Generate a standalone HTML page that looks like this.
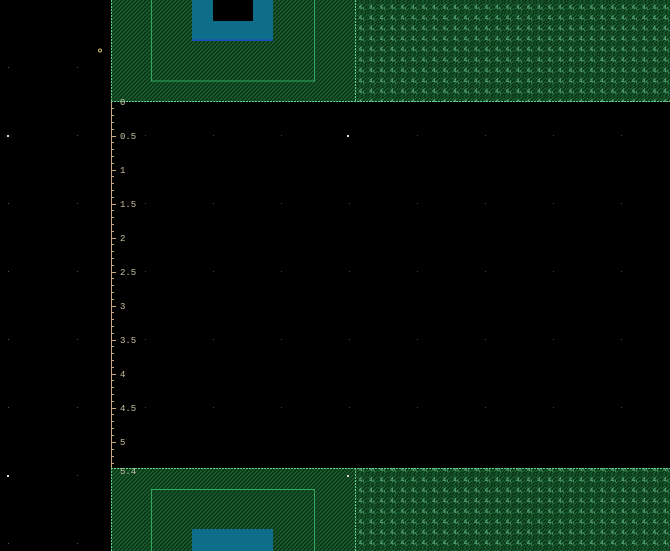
<!DOCTYPE html>
<html><head><style>
html,body{margin:0;padding:0;background:#000;width:670px;height:551px;overflow:hidden}
svg{display:block}
text{font-family:"Liberation Mono",monospace;font-size:9px;fill:#c8c0a0}
</style></head><body>
<svg width="670" height="551" viewBox="0 0 670 551" xmlns="http://www.w3.org/2000/svg">
<defs>
<pattern id="h" width="4" height="4" patternUnits="userSpaceOnUse">
<rect width="4" height="4" fill="#0a3518"/>
<path d="M-1,1 L1,-1 M0,4 L4,0 M3,5 L5,3" stroke="#1f6a34" stroke-width="1"/>
</pattern>
<pattern id="d" x="357" y="2" width="10.5" height="10.5" patternUnits="userSpaceOnUse">
<rect width="10.5" height="10.5" fill="url(#h)"/>
<path d="M2,5 L4,3 L4,7 M2,6 L5,6 M6,5 L7,8" stroke="#4f9a72" stroke-width="0.9" fill="none"/>
</pattern>
</defs>
<rect x="111" y="0" width="244" height="102" fill="url(#h)"/>
<rect x="355" y="0" width="315" height="102" fill="url(#d)"/>
<rect x="151.5" y="-1" width="163" height="82" fill="none" stroke="#2fa860" stroke-width="1"/>
<rect x="192" y="0" width="81" height="41" fill="#0e6e8a"/>
<rect x="192" y="39.5" width="81" height="1.5" fill="#1a4ac0"/>
<rect x="213" y="0" width="40" height="21" fill="#000"/>
<line x1="111" y1="101.5" x2="670" y2="101.5" stroke="#5fcf8a" stroke-dasharray="2,1"/>
<line x1="355.5" y1="0" x2="355.5" y2="102" stroke="#5fcf8a" stroke-dasharray="2,1"/>
<line x1="111.5" y1="0" x2="111.5" y2="102" stroke="#5fcf8a" stroke-dasharray="2,1"/>
<rect x="111" y="468" width="244" height="83" fill="url(#h)"/>
<rect x="355" y="468" width="315" height="83" fill="url(#d)"/>
<rect x="151.5" y="489.5" width="163" height="70" fill="none" stroke="#2fa860" stroke-width="1"/>
<rect x="192" y="529" width="81" height="22" fill="#0e6e8a"/>
<line x1="111" y1="468.5" x2="670" y2="468.5" stroke="#5fcf8a" stroke-dasharray="2,1"/>
<line x1="355.5" y1="468" x2="355.5" y2="551" stroke="#5fcf8a" stroke-dasharray="2,1"/>
<line x1="111.5" y1="468" x2="111.5" y2="551" stroke="#5fcf8a" stroke-dasharray="2,1"/>
<line x1="111.5" y1="102" x2="111.5" y2="468" stroke="#c8a878"/>
<g stroke="#c8a878">
<path id="tk" d="M111,108.5h3M111,115.5h3M111,122.5h3M111,129.5h3M111,136.5h5M111,142.5h3M111,149.5h3M111,156.5h3M111,163.5h3M111,170.5h5M111,176.5h3M111,183.5h3M111,190.5h3M111,197.5h3M111,204.5h5M111,210.5h3M111,217.5h3M111,224.5h3M111,231.5h3M111,238.5h5"/>
<use href="#tk" y="136"/>
<path d="M111,380.5h3M111,387.5h3M111,394.5h3M111,401.5h3M111,408.5h5M111,414.5h3M111,421.5h3M111,428.5h3M111,435.5h3M111,442.5h5M111,449.5h3M111,456.5h3M111,463.5h3"/>
</g>
<text x="120" y="105">0</text>
<text x="120" y="139">0.5</text>
<text x="120" y="173">1</text>
<text x="120" y="207">1.5</text>
<text x="120" y="241">2</text>
<text x="120" y="275">2.5</text>
<text x="120" y="309">3</text>
<text x="120" y="343">3.5</text>
<text x="120" y="377">4</text>
<text x="120" y="411">4.5</text>
<text x="120" y="445">5</text>
<text x="120" y="474">5.4</text>
<circle cx="100" cy="50.5" r="1.5" fill="none" stroke="#d0c060"/>
<g fill="#555">
<rect x="77" y="67" width="1" height="1"/><rect x="8" y="67" width="1" height="1"/>
<rect x="77" y="203" width="1" height="1"/><rect x="8" y="203" width="1" height="1"/>
<rect x="77" y="271" width="1" height="1"/><rect x="8" y="271" width="1" height="1"/>
<rect x="77" y="339" width="1" height="1"/><rect x="8" y="339" width="1" height="1"/>
<rect x="77" y="407" width="1" height="1"/><rect x="8" y="407" width="1" height="1"/>
<rect x="77" y="135" width="1" height="1"/><rect x="77" y="475" width="1" height="1"/>
<rect x="77" y="543" width="1" height="1"/><rect x="8" y="543" width="1" height="1"/>
</g>
<g fill="#444">
<rect x="145" y="135" width="1" height="1"/><rect x="213" y="135" width="1" height="1"/><rect x="281" y="135" width="1" height="1"/><rect x="417" y="135" width="1" height="1"/><rect x="485" y="135" width="1" height="1"/><rect x="553" y="135" width="1" height="1"/><rect x="621" y="135" width="1" height="1"/>
<rect x="145" y="203" width="1" height="1"/><rect x="213" y="203" width="1" height="1"/><rect x="281" y="203" width="1" height="1"/><rect x="349" y="203" width="1" height="1"/><rect x="417" y="203" width="1" height="1"/><rect x="485" y="203" width="1" height="1"/><rect x="553" y="203" width="1" height="1"/><rect x="621" y="203" width="1" height="1"/>
<rect x="145" y="271" width="1" height="1"/><rect x="213" y="271" width="1" height="1"/><rect x="281" y="271" width="1" height="1"/><rect x="349" y="271" width="1" height="1"/><rect x="417" y="271" width="1" height="1"/><rect x="485" y="271" width="1" height="1"/><rect x="553" y="271" width="1" height="1"/><rect x="621" y="271" width="1" height="1"/>
<rect x="145" y="339" width="1" height="1"/><rect x="213" y="339" width="1" height="1"/><rect x="281" y="339" width="1" height="1"/><rect x="349" y="339" width="1" height="1"/><rect x="417" y="339" width="1" height="1"/><rect x="485" y="339" width="1" height="1"/><rect x="553" y="339" width="1" height="1"/><rect x="621" y="339" width="1" height="1"/>
<rect x="145" y="407" width="1" height="1"/><rect x="213" y="407" width="1" height="1"/><rect x="281" y="407" width="1" height="1"/><rect x="349" y="407" width="1" height="1"/><rect x="417" y="407" width="1" height="1"/><rect x="485" y="407" width="1" height="1"/><rect x="553" y="407" width="1" height="1"/><rect x="621" y="407" width="1" height="1"/>
</g>
<g fill="#ddd">
<rect x="7" y="135" width="2" height="2"/><rect x="347" y="135" width="2" height="2"/>
<rect x="7" y="475" width="2" height="2"/><rect x="347" y="475" width="2" height="2"/>
</g>
</svg>
</body></html>
